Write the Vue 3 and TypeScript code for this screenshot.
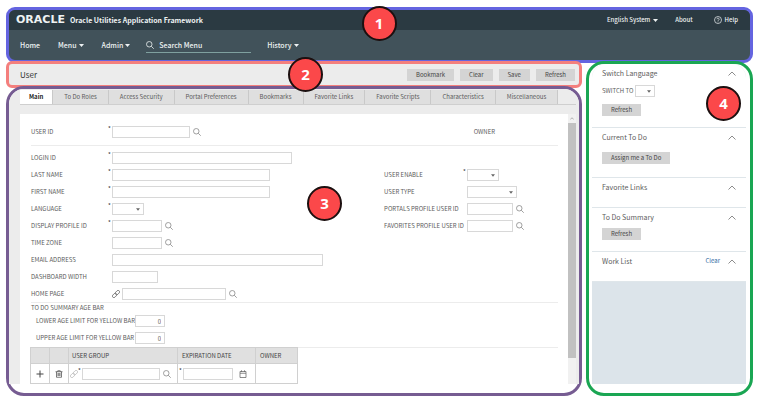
<script setup lang="ts">
import { ref } from 'vue'

interface Field {
  id: string
  label: string
  kind: 'text' | 'select'
  size: string
  required?: boolean
  search?: boolean
  link?: boolean
}

const tabs: string[] = [
  'Main',
  'To Do Roles',
  'Access Security',
  'Portal Preferences',
  'Bookmarks',
  'Favorite Links',
  'Favorite Scripts',
  'Characteristics',
  'Miscellaneous',
]
const activeTab = ref('Main')

const actions: string[] = ['Bookmark', 'Clear', 'Save', 'Refresh']

const leftFields: Field[] = [
  { id: 'login-id', label: 'LOGIN ID', kind: 'text', size: 'w-180', required: true },
  { id: 'last-name', label: 'LAST NAME', kind: 'text', size: 'w-158', required: true },
  { id: 'first-name', label: 'FIRST NAME', kind: 'text', size: 'w-158', required: true },
  { id: 'language', label: 'LANGUAGE', kind: 'select', size: 'w-32', required: true },
  { id: 'display-profile', label: 'DISPLAY PROFILE ID', kind: 'text', size: 'w-50', required: true, search: true },
  { id: 'time-zone', label: 'TIME ZONE', kind: 'text', size: 'w-50', search: true },
  { id: 'email', label: 'EMAIL ADDRESS', kind: 'text', size: 'w-211' },
  { id: 'dashboard-width', label: 'DASHBOARD WIDTH', kind: 'text', size: 'w-46' },
  { id: 'home-page', label: 'HOME PAGE', kind: 'text', size: 'w-104', link: true, search: true },
]

const rightFields: Field[] = [
  { id: 'user-enable', label: 'USER ENABLE', kind: 'select', size: 'w-32', required: true },
  { id: 'user-type', label: 'USER TYPE', kind: 'select', size: 'w-50' },
  { id: 'portals-profile', label: 'PORTALS PROFILE USER ID', kind: 'text', size: 'w-46', search: true },
  { id: 'favorites-profile', label: 'FAVORITES PROFILE USER ID', kind: 'text', size: 'w-46', search: true },
]

const columns = [
  { id: 'left', fields: leftFields },
  { id: 'right', fields: rightFields },
]

const lowerLimit = ref('0')
const upperLimit = ref('0')
</script>

<template>
  <svg class="sprite" aria-hidden="true">
    <symbol id="i-search" viewBox="0 0 16 16">
      <circle cx="6.5" cy="6.5" r="5.500" fill="none" stroke="currentColor" stroke-width="1.6" />
      <path d="M10.500 10.500 15.500 15.500" fill="none" stroke="currentColor" stroke-width="1.6" />
    </symbol>
    <symbol id="i-caret" viewBox="0 0 10 6"><path d="M0 0h10L5 6z" fill="currentColor" /></symbol>
    <symbol id="i-chevron" viewBox="0 0 16 10">
      <path d="M1 9 8 2l7 7" fill="none" stroke="currentColor" stroke-width="1.7" />
    </symbol>
    <symbol id="i-link" viewBox="0 0 16 16">
      <g fill="none" stroke="currentColor" stroke-width="1.5" transform="rotate(-45 8 8)">
        <rect x="-1" y="5" width="10" height="6" rx="3" />
        <rect x="7" y="5" width="10" height="6" rx="3" />
      </g>
    </symbol>
    <symbol id="i-plus" viewBox="0 0 16 16">
      <path d="M8 1v14M1 8h14" fill="none" stroke="currentColor" stroke-width="2" />
    </symbol>
    <symbol id="i-trash" viewBox="0 0 16 16">
      <path d="M1 3.5h14M5.5 3.5v-2h5v2M3 3.5v11h10v-11M6 6v6M8 6v6M10 6v6" fill="none" stroke="currentColor" stroke-width="1.4" />
    </symbol>
    <symbol id="i-calendar" viewBox="0 0 16 16">
      <path d="M2 3h12v12H2zM2 6.500h12M5 .5V4M11 .5V4" fill="none" stroke="currentColor" stroke-width="1.5" />
    </symbol>
    <symbol id="i-help" viewBox="0 0 16 16">
      <circle cx="8" cy="8" r="7" fill="none" stroke="currentColor" stroke-width="1.4" />
      <path d="M5.800 6.500a2.200 2.200 0 1 1 3.200 2c-.7.400-1 .7-1 1.500M8 11v1.500" fill="none" stroke="currentColor" stroke-width="1.4" />
    </symbol>
  </svg>

  <div class="page">
    <header class="region banner">
      <div class="topbar">
        <span class="logo">ORACLE</span>
        <span class="product">Oracle Utilities Application Framework</span>
        <a class="top-link system" href="#system">English System <svg class="caret"><use href="#i-caret" /></svg></a>
        <a class="top-link about" href="#about">About</a>
        <a class="top-link" href="#help"><svg class="icon"><use href="#i-help" /></svg> Help</a>
      </div>
      <nav class="navbar">
        <a class="nav-home" href="#home">Home</a>
        <button type="button" class="nav-menu">Menu <svg class="caret"><use href="#i-caret" /></svg></button>
        <button type="button" class="nav-admin">Admin <svg class="caret"><use href="#i-caret" /></svg></button>
        <label class="nav-search">
          <svg class="icon"><use href="#i-search" /></svg>
          <input type="text" placeholder="Search Menu" aria-label="Search Menu" />
        </label>
        <button type="button">History <svg class="caret"><use href="#i-caret" /></svg></button>
      </nav>
      <span class="marker marker-1">1</span>
    </header>

    <div class="body">
      <main class="work">
        <div class="region title-row">
          <h1>User</h1>
          <div class="actions">
            <button v-for="action in actions" :key="action" type="button" class="btn">{{ action }}</button>
          </div>
          <span class="marker marker-2">2</span>
        </div>

        <div class="region content">
          <div class="canvas">
            <div class="tabs" role="tablist">
              <button
                v-for="tab in tabs"
                :key="tab"
                type="button"
                role="tab"
                class="tab"
                :class="{ active: tab === activeTab }"
                :aria-selected="tab === activeTab"
                @click="activeTab = tab"
              >{{ tab }}</button>
            </div>

            <div class="sheet">
              <form class="form" @submit.prevent>
                <div class="identity">
                  <div class="field">
                    <label for="user-id">USER ID</label>
                    <span class="star">*</span>
                    <input id="user-id" class="box w-78" type="text" />
                    <button type="button" class="icon-btn" aria-label="Find user"><svg class="icon"><use href="#i-search" /></svg></button>
                  </div>
                  <span class="owner">OWNER</span>
                </div>

                <div class="fields">
                  <div v-for="column in columns" :key="column.id" class="column" :class="column.id">
                    <div v-for="field in column.fields" :key="field.id" class="field">
                      <label :for="field.id">{{ field.label }}</label>
                      <span class="star">{{ field.required ? '*' : '' }}</span>
                      <svg v-if="field.link" class="icon link"><use href="#i-link" /></svg>
                      <span v-if="field.kind === 'select'" class="select" :class="field.size">
                        <select :id="field.id" class="box"><option></option></select>
                        <svg class="arrow"><use href="#i-caret" /></svg>
                      </span>
                      <input v-else :id="field.id" class="box" :class="field.size" type="text" />
                      <button v-if="field.search" type="button" class="icon-btn" :aria-label="field.label"><svg class="icon"><use href="#i-search" /></svg></button>
                    </div>
                  </div>
                </div>

                <div class="age">
                  <fieldset>
                    <legend>TO DO SUMMARY AGE BAR</legend>
                    <div class="limits">
                      <div class="field">
                        <label for="lower-limit">LOWER AGE LIMIT FOR YELLOW BAR</label>
                        <input id="lower-limit" v-model="lowerLimit" class="box number" type="text" />
                      </div>
                      <div class="field">
                        <label for="upper-limit">UPPER AGE LIMIT FOR YELLOW BAR</label>
                        <input id="upper-limit" v-model="upperLimit" class="box number" type="text" />
                      </div>
                    </div>
                  </fieldset>
                </div>

                <div class="groups">
                  <table>
                    <thead>
                      <tr>
                        <th class="tool"></th>
                        <th class="tool"></th>
                        <th class="group">USER GROUP</th>
                        <th class="date">EXPIRATION DATE</th>
                        <th class="own">OWNER</th>
                      </tr>
                    </thead>
                    <tbody>
                      <tr>
                        <td class="tool"><button type="button" class="icon-btn dark" aria-label="Add"><svg class="icon"><use href="#i-plus" /></svg></button></td>
                        <td class="tool"><button type="button" class="icon-btn dark" aria-label="Delete"><svg class="icon"><use href="#i-trash" /></svg></button></td>
                        <td>
                          <div class="cell">
                            <svg class="icon faint"><use href="#i-link" /></svg>
                            <span class="star">*</span>
                            <input class="box w-78" type="text" aria-label="User group" />
                            <button type="button" class="icon-btn" aria-label="Find group"><svg class="icon"><use href="#i-search" /></svg></button>
                          </div>
                        </td>
                        <td>
                          <div class="cell">
                            <span class="star">*</span>
                            <input class="box w-50" type="text" aria-label="Expiration date" />
                            <button type="button" class="icon-btn calendar" aria-label="Choose date"><svg class="icon"><use href="#i-calendar" /></svg></button>
                          </div>
                        </td>
                        <td></td>
                      </tr>
                    </tbody>
                  </table>
                </div>
              </form>
              <div class="scrollbar">
                <svg class="scroll-up"><use href="#i-chevron" /></svg>
                <div class="thumb"></div>
              </div>
            </div>
          </div>
          <span class="marker marker-3">3</span>
        </div>
      </main>

      <aside class="region dashboard">
        <div class="zones">
          <section class="zone language">
            <header><h2>Switch Language</h2><button type="button" class="fold" aria-label="Collapse"><svg><use href="#i-chevron" /></svg></button></header>
            <div class="switch">
              <label for="switch-to">SWITCH TO</label>
              <span class="select">
                <select id="switch-to" class="box"><option></option></select>
                <svg class="arrow"><use href="#i-caret" /></svg>
              </span>
            </div>
            <button type="button" class="btn">Refresh</button>
          </section>
          <section class="zone current">
            <header><h2>Current To Do</h2><button type="button" class="fold" aria-label="Collapse"><svg><use href="#i-chevron" /></svg></button></header>
            <button type="button" class="btn">Assign me a To Do</button>
          </section>
          <section class="zone">
            <header><h2>Favorite Links</h2><button type="button" class="fold" aria-label="Collapse"><svg><use href="#i-chevron" /></svg></button></header>
          </section>
          <section class="zone summary">
            <header><h2>To Do Summary</h2><button type="button" class="fold" aria-label="Collapse"><svg><use href="#i-chevron" /></svg></button></header>
            <button type="button" class="btn">Refresh</button>
          </section>
          <section class="zone worklist">
            <header><h2>Work List</h2><a href="#clear">Clear</a><button type="button" class="fold" aria-label="Collapse"><svg><use href="#i-chevron" /></svg></button></header>
          </section>
        </div>
        <span class="marker marker-4">4</span>
      </aside>
    </div>
  </div>
</template>

<style>
body {
  margin: 0;
  background: #fff;
}
</style>

<style scoped>
.page,
.page * {
  box-sizing: border-box;
}

.page {
  padding: 7px 6px 6px;
  font-family: 'Noto Sans CJK SC', 'Open Sans', sans-serif;
  font-size: 6px;
  line-height: 8px;
  color: #5c5c5c;
}

.sprite {
  position: absolute;
  width: 0;
  height: 0;
}

button,
input,
select {
  margin: 0;
  padding: 0;
  border: 0;
  border-radius: 0;
  background: none;
  font: inherit;
  color: inherit;
}

a {
  color: inherit;
  text-decoration: none;
}

h1,
h2 {
  margin: 0;
  font-weight: 400;
}

.icon {
  display: block;
  flex: none;
  width: 8px;
  height: 8px;
}

.caret {
  width: 5px;
  height: 3px;
}

.region {
  position: relative;
  border: 3px solid;
}

/* Banner */
.banner {
  border-color: #6464e0;
  border-radius: 9px;
  background: #41525a;
  color: #eef2f3;
  font-weight: 500;
}

.topbar {
  display: flex;
  align-items: center;
  height: 20px;
  padding: 0 12px 0 7px;
  border-radius: 6px 6px 0 0;
  background: #2b3a42;
}

.logo {
  margin-right: 5px;
  font: bold 11px/12px 'DejaVu Sans', sans-serif;
}

.product {
  margin-right: auto;
  font-size: 7px;
  font-weight: 700;
}

.top-link {
  display: flex;
  align-items: center;
  gap: 3px;
}

.system {
  margin-right: 17px;
}

.about {
  margin-right: 21px;
}

.navbar {
  display: flex;
  align-items: center;
  height: 30px;
  padding: 0 11px;
  font-size: 7px;
}

.navbar button {
  display: flex;
  align-items: center;
  gap: 2px;
}

.nav-home {
  margin-right: 18px;
}

.navbar .nav-menu {
  margin-right: 18px;
}

.navbar .nav-admin {
  margin-right: 16px;
}

.nav-search {
  display: flex;
  align-items: center;
  gap: 5px;
  width: 105px;
  height: 16px;
  margin-right: 16px;
  border-bottom: 1px solid #7fa09f;
}

.nav-search input {
  width: 80px;
  outline: none;
}

.nav-search input::placeholder {
  color: #eef2f3;
  opacity: 1;
}

/* Body columns */
.body {
  display: flex;
  gap: 4px;
  margin-top: -2px;
}

.work {
  flex: 1;
  min-width: 0;
}

.title-row {
  display: flex;
  align-items: center;
  justify-content: space-between;
  height: 27px;
  padding: 0 4px 0 11px;
  border-color: #f47f7d;
  border-radius: 6px;
  background: #ececec;
}

.title-row h1 {
  font-size: 8px;
  line-height: 12px;
  color: #333;
}

.actions {
  display: flex;
  gap: 6px;
}

.btn {
  height: 12px;
  padding: 0 9px;
  background: #d4d4d4;
  color: #444;
  white-space: nowrap;
}

/* Content */
.content {
  margin-top: -2px;
  padding-bottom: 9px;
  border-color: #765c92;
  border-radius: 18px;
}

.canvas {
  padding: 1px 3px 0 11px;
  border-radius: 15px 15px 0 0;
  background: #ececec;
}

.tabs {
  display: flex;
  height: 15px;
  border-bottom: 1px solid #cfcfcf;
}

.tab {
  padding: 0 11px;
  border-right: 1px solid #c9c9c9;
  background: #dfdfdf;
  white-space: nowrap;
}

.tab.active {
  padding: 0 9px;
  background: #fff;
  color: #222;
  font-weight: 700;
}

.sheet {
  display: flex;
  margin-top: 9px;
  background: #fff;
}

.form {
  flex: 1;
  min-width: 0;
  padding: 12px 10px 0 11px;
}

.identity {
  display: flex;
  align-items: center;
  height: 20px;
  padding-bottom: 7px;
  border-bottom: 1px solid #ececec;
}

.identity .field {
  width: 84%;
}

.fields {
  display: flex;
  padding: 6px 0 2px;
}

.column {
  display: flex;
  flex-direction: column;
  gap: 5px;
}

.column.left {
  width: 67%;
}

.column.right {
  padding-top: 17px;
}

.field {
  display: flex;
  align-items: center;
  height: 12px;
}

.field label {
  width: 77px;
  white-space: nowrap;
}

.column.right label {
  width: 79px;
}

.star {
  align-self: flex-start;
  width: 4px;
  line-height: 6px;
  color: #333;
}

.box {
  display: block;
  height: 12px;
  border: 1px solid #d8d8d8;
  background: #fff;
  outline: none;
}

.select {
  position: relative;
  display: block;
}

.select .box {
  width: 100%;
  appearance: none;
}

.arrow {
  position: absolute;
  top: 5px;
  right: 4px;
  width: 4px;
  height: 3px;
  color: #666;
  pointer-events: none;
}

.w-32 { width: 32px; }
.w-46 { width: 46px; }
.w-50 { width: 50px; }
.w-78 { width: 78px; }
.w-104 { width: 104px; }
.w-158 { width: 158px; }
.w-180 { width: 180px; }
.w-211 { width: 211px; }

.link {
  margin-right: 2px;
  color: #666;
}

.icon-btn {
  margin-left: 3px;
  color: #888;
}

.age {
  padding: 1px 0 3px;
  border-top: 1px solid #ececec;
}

.age fieldset {
  margin: 0;
  padding: 0;
  border: 0;
}

.age legend {
  padding: 0;
}

.limits {
  display: flex;
  flex-direction: column;
  gap: 5px;
  padding: 3px 0 0 5px;
}

.age .field label {
  width: 99px;
}

.number {
  width: 30px;
  padding-right: 3px;
  text-align: right;
}

.groups {
  margin-left: -1px;
  border-top: 1px solid #ececec;
}

table {
  border-collapse: collapse;
  table-layout: fixed;
  width: 268px;
  margin-top: -1px;
}

th,
td {
  padding: 0 0 0 1px;
  border: 1px solid #d0d0d0;
  text-align: left;
}

th {
  height: 16px;
  padding-left: 4px;
  background: #e0e0e0;
  color: #444;
  font-weight: 400;
}

td {
  height: 20px;
}

th.tool {
  width: 19px;
}

td.tool {
  padding: 0;
  text-align: center;
}

th.group {
  width: 109px;
  padding-left: 3px;
}

th.date {
  width: 78px;
}

.cell {
  display: flex;
  align-items: center;
  height: 12px;
}

.dark {
  margin: 0;
  color: #444;
  vertical-align: middle;
}

.faint {
  color: #bbb;
}

.calendar {
  margin-left: 6px;
  color: #666;
}

.scrollbar {
  width: 8px;
  background: #f1f1f1;
}

.scroll-up {
  display: block;
  width: 4px;
  height: 3px;
  margin: 3px auto;
  color: #555;
}

.thumb {
  height: 87%;
  background: #c1c1c1;
}

/* Dashboard */
.dashboard {
  flex: 0 0 167px;
  padding: 0 4px 9px 3px;
  border-color: #1aa653;
  border-radius: 18px;
}

.zones {
  height: 100%;
  border-radius: 14px 14px 0 0;
  background: #dce4ea;
}

.zone {
  min-height: 30px;
  padding: 4px 10px;
  border-bottom: 1px solid #dfe6ea;
  background: #fff;
}

.zone:first-child {
  border-radius: 14px 14px 0 0;
}

.zone header {
  display: flex;
  align-items: center;
  height: 10px;
}

.zone h2 {
  margin-right: auto;
  font-size: 7px;
  line-height: 10px;
}

.zone a {
  margin-right: 8px;
  color: #2f6a9f;
}

.fold svg {
  display: block;
  width: 8px;
  height: 5px;
  color: #777;
}

.language {
  height: 64px;
}

.switch {
  display: flex;
  align-items: center;
  gap: 2px;
  margin: 7px 0;
}

.switch label {
  width: 31px;
  white-space: nowrap;
}

.switch .select {
  width: 20px;
}

.current {
  height: 50px;
}

.current .btn {
  margin-top: 10px;
}

.summary {
  height: 44px;
}

.summary .btn {
  margin-top: 6px;
}

/* Numbered markers */
.marker {
  position: absolute;
  z-index: 2;
  width: 35px;
  height: 35px;
  border: 2px solid #1c1010;
  border-radius: 50%;
  background: #fb484a;
  color: #fff;
  font: bold 15px/31px 'Open Sans', sans-serif;
  text-align: center;
}

.marker-1 {
  top: -4px;
  left: calc(50% - 18px);
}

.marker-2 {
  top: -7px;
  left: calc(50% - 6px);
}

.marker-3 {
  top: 97px;
  left: calc(50% + 13px);
}

.marker-4 {
  top: 22px;
  right: 9px;
}
</style>
